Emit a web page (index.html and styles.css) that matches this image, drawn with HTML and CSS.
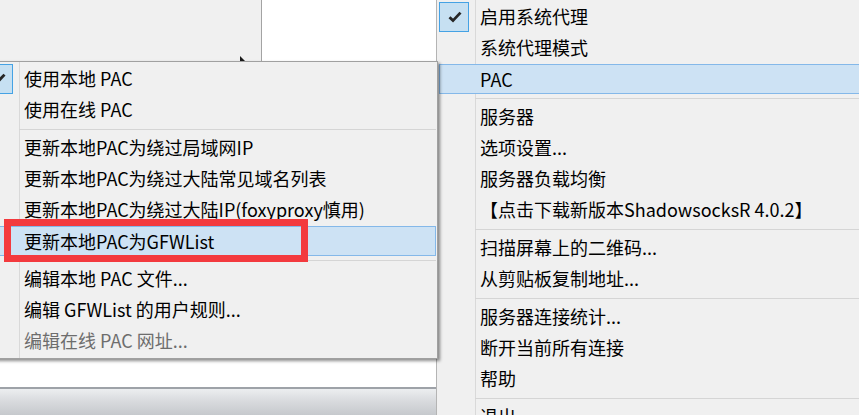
FILE: index.html
```html
<!DOCTYPE html>
<html lang="zh-CN">
<head>
<meta charset="utf-8">
<title>ShadowsocksR 菜单</title>
<link rel="stylesheet" href="styles.css">
</head>
<body>
<div class="screen">
  <div class="backdrop">
    <div class="top">
      <div class="panel-gray">
        <svg class="tri" width="6" height="6" viewBox="0 0 6 6"><polygon points="0,0 6,6 0,6" fill="#1a1a1a"/></svg>
      </div>
      <div class="vline"></div>
      <div class="panel-white"></div>
    </div>
    <div class="white-area"></div>
    <div class="bar-line"></div>
    <div class="bar"></div>
  </div>

  <div class="menu main-menu">
    <div class="item"><span class="ico"><span class="chk"><svg width="14" height="12" viewBox="0 0 14 12"><path d="M1.5 6.2 L5 9.6 L12.5 1.6" fill="none" stroke="#262626" stroke-width="2.8" stroke-linejoin="miter"/></svg></span></span><span class="lbl">启用系统代理</span></div>
    <div class="item"><span class="ico"></span><span class="lbl">系统代理模式</span></div>
    <div class="item hot"><span class="ico"></span><span class="lbl">PAC</span></div>
    <div class="sep"></div>
    <div class="item"><span class="ico"></span><span class="lbl">服务器</span></div>
    <div class="item"><span class="ico"></span><span class="lbl">选项设置...</span></div>
    <div class="item"><span class="ico"></span><span class="lbl">服务器负载均衡</span></div>
    <div class="item"><span class="ico"></span><span class="lbl">【点击下载新版本ShadowsocksR 4.0.2】</span></div>
    <div class="sep"></div>
    <div class="item"><span class="ico"></span><span class="lbl">扫描屏幕上的二维码...</span></div>
    <div class="item"><span class="ico"></span><span class="lbl">从剪贴板复制地址...</span></div>
    <div class="sep"></div>
    <div class="item"><span class="ico"></span><span class="lbl">服务器连接统计...</span></div>
    <div class="item"><span class="ico"></span><span class="lbl">断开当前所有连接</span></div>
    <div class="item"><span class="ico"></span><span class="lbl">帮助</span></div>
    <div class="sep"></div>
    <div class="item"><span class="ico"></span><span class="lbl">退出</span></div>
  </div>

  <div class="menu sub-menu">
    <div class="item"><span class="ico"><span class="chk"><svg width="14" height="12" viewBox="0 0 14 12"><path d="M1.5 6.2 L5 9.6 L12.5 1.6" fill="none" stroke="#262626" stroke-width="2.8" stroke-linejoin="miter"/></svg></span></span><span class="lbl">使用本地 PAC</span></div>
    <div class="item"><span class="ico"></span><span class="lbl">使用在线 PAC</span></div>
    <div class="sep"></div>
    <div class="item"><span class="ico"></span><span class="lbl">更新本地PAC为绕过局域网IP</span></div>
    <div class="item"><span class="ico"></span><span class="lbl">更新本地PAC为绕过大陆常见域名列表</span></div>
    <div class="item"><span class="ico"></span><span class="lbl">更新本地PAC为绕过大陆IP(foxyproxy慎用)</span></div>
    <div class="item hot"><span class="ico"></span><span class="lbl">更新本地PAC为GFWList</span></div>
    <div class="sep"></div>
    <div class="item"><span class="ico"></span><span class="lbl">编辑本地 PAC 文件...</span></div>
    <div class="item"><span class="ico"></span><span class="lbl">编辑 GFWList 的用户规则...</span></div>
    <div class="item disabled"><span class="ico"></span><span class="lbl">编辑在线 PAC 网址...</span></div>
  </div>

  <div class="annot"></div>
</div>
</body>
</html>
```

FILE: styles.css
```css
html, body {
  margin: 0;
  padding: 0;
  background: #f0f0f0;
}

.screen {
  position: relative;
  width: 859px;
  height: 415px;
  overflow: hidden;
  font-family: "Noto Sans CJK SC", "Noto Sans", sans-serif;
  font-size: 18px;
  color: #000;
}

/* ---------- background window ---------- */
.backdrop {
  width: 436px;
  height: 415px;
  display: flex;
  flex-direction: column;
}

.top {
  height: 61px;
  display: flex;
  flex: none;
}

.panel-gray {
  width: 261px;
  background: #f0f0f0;
  display: flex;
  align-items: flex-end;
  justify-content: flex-end;
  padding-right: 15px;
  box-sizing: border-box;
}

.tri {
  display: block;
  margin-bottom: -1px;
}

.vline {
  width: 1px;
  background: #a3a3a3;
}

.panel-white {
  flex: 1;
  background: #fff;
}

.white-area {
  flex: 1;
  background: #fff;
}

.bar-line {
  height: 2px;
  flex: none;
  background: #9ea2a8;
}

.bar {
  height: 26px;
  flex: none;
  background: linear-gradient(#eceef0, #d9dbde 45%, #c6c9cd);
}

/* ---------- menus ---------- */
.menu {
  position: absolute;
  box-sizing: border-box;
  background-color: #f0f0f0;
  background-image: linear-gradient(90deg, transparent 38px, #d9d9d9 38px, #d9d9d9 39px, transparent 39px);
  background-repeat: no-repeat;
  border: 1px solid #a8a8a8;
  padding: 1px 0 2px;
  display: flex;
  flex-direction: column;
}

.main-menu {
  left: 436px;
  top: -1px;
  width: 520px;
  height: 460px;
  border-color: #b4b4b4;
}

.sub-menu {
  left: -20px;
  top: 61px;
  width: 458px;
  border-color: #a0a0a0;
  box-shadow: 2px 2px 3px rgba(0, 0, 0, 0.45);
}

.item {
  box-sizing: border-box;
  height: 31px;
  margin: 0 1px 0 2px;
  display: flex;
  align-items: center;
  flex: none;
  white-space: nowrap;
}

.item.hot {
  border-top: 1px solid transparent;
  background-clip: padding-box;
  background-color: #cde2f4;
  box-shadow: inset 0 0 0 1px #84b8e9;
}

.item.disabled {
  color: #6d6d6d;
}

.ico {
  width: 36px;
  height: 100%;
  flex: none;
  display: flex;
  align-items: flex-end;
}

.chk {
  box-sizing: border-box;
  width: 30px;
  height: 30px;
  background: #c6e0f2;
  border: 1px solid #45a2e4;
  display: flex;
  align-items: center;
  justify-content: center;
}

.chk svg {
  display: block;
  margin-left: 1px;
}

.lbl {
  padding-left: 5px;
  line-height: 31px;
}

.sep {
  height: 7px;
  flex: none;
  margin: 0 1px 0 38px;
  background: linear-gradient(#d5d5d5, #d5d5d5) 0 4px / 100% 1px no-repeat;
}

/* ---------- annotation ---------- */
.annot {
  position: absolute;
  left: 4px;
  top: 219px;
  width: 304px;
  height: 43px;
  box-sizing: border-box;
  border: 7px solid #f33a3e;
}
```
